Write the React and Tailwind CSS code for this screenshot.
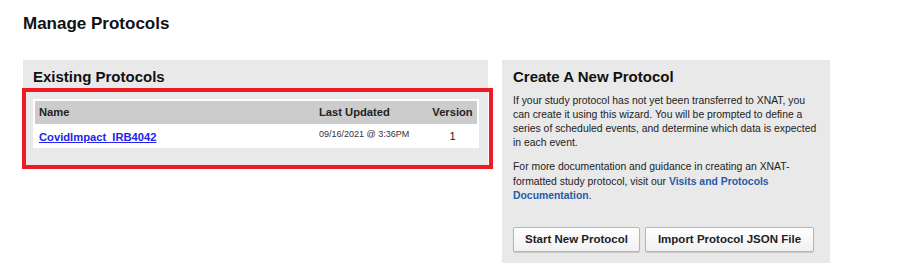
import React from 'react'

const protocols = [
    { name: 'CovidImpact_IRB4042', updated: '09/16/2021 @ 3:36PM', version: 1 },
]

const ExistingProtocols = () => {
    return (
        <div className="w-[465px] h-[105px] bg-[#e9e9e9] pt-[8px] pl-[10px] pr-[9px]">
            <h3 className="text-[15px] leading-[18px] font-bold text-[#111]">Existing Protocols</h3>

            {/* Protocol table */}
            <div className="mt-[13px] bg-white p-[2px]">
                <div className="grid grid-cols-[280px_110px_1fr] h-[23px] items-center bg-[#cccccc] text-[11.2px] font-bold text-[#222]">
                    <div className="pl-[4px]">Name</div>
                    <div className="pl-[4px]">Last Updated</div>
                    <div className="text-center pl-[3px]">Version</div>
                </div>
                {protocols.map((p) => (
                    <div key={p.name} className="grid grid-cols-[280px_110px_1fr] h-[22px] items-center">
                        <div className="pl-[4px]">
                            <a href="#" className="text-[11.2px] font-bold text-[#2323ea] underline">{p.name}</a>
                        </div>
                        <div className="pl-[4px] text-[9px] text-[#333] -mt-[2px]">{p.updated}</div>
                        <div className="text-center pl-[3px] text-[11px] text-[#222]">{p.version}</div>
                    </div>
                ))}
            </div>
        </div>
    )
}

const CreateProtocol = () => {
    return (
        <div className="w-[328px] h-[203px] bg-[#e9e9e9] pt-[8px] px-[11px]">
            <h3 className="text-[15px] leading-[18px] font-bold text-[#111]">Create A New Protocol</h3>
            <p className="mt-[7.5px] text-[10.4px] leading-[14.2px] text-[#222]">
                If your study protocol has not yet been transferred to XNAT, you can create it using this wizard. You will be prompted to define a series of scheduled events, and determine which data is expected in each event.
            </p>
            <p className="mt-[10px] text-[10.4px] leading-[14.2px] text-[#222]">
                For more documentation and guidance in creating an XNAT-formatted study protocol, visit our{' '}
                <a href="#" className="font-bold text-[#2a5aaa]">Visits and Protocols</a>{' '}
                <a href="#" className="font-bold text-[#2a5aaa]">Documentation</a>.
            </p>
            <div className="mt-[24px] flex gap-[5px]">
                <button className="h-[25px] w-[127px] rounded-[2px] border border-[#b5b5b5] bg-gradient-to-b from-white to-[#f1f1f1] shadow-[0_1px_1px_rgba(0,0,0,0.15)] text-[11.5px] font-bold text-[#222]">
                    Start New Protocol
                </button>
                <button className="h-[25px] w-[169px] rounded-[2px] border border-[#b5b5b5] bg-gradient-to-b from-white to-[#f1f1f1] shadow-[0_1px_1px_rgba(0,0,0,0.15)] text-[11.5px] font-bold text-[#222]">
                    Import Protocol JSON File
                </button>
            </div>
        </div>
    )
}

export default function App() {
    return (
        <div className="relative w-[900px] h-[276px] bg-white pt-[14px] pl-[23px] font-['Liberation_Sans',Arial,sans-serif]">
            <h2 className="text-[17px] leading-[20px] font-bold text-[#111]">Manage Protocols</h2>

            <div className="mt-[26px] flex items-start gap-[14px]">
                <ExistingProtocols />
                <CreateProtocol />
            </div>

            {/* red highlight annotation */}
            <div className="absolute left-[22px] top-[88px] w-[471px] h-[81px] border-[4px] border-[#ed1c24] pointer-events-none" />
        </div>
    )
}
